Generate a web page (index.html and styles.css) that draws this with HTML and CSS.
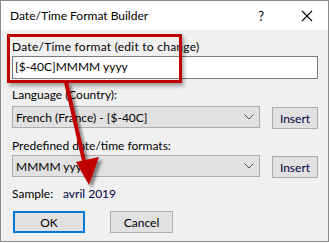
FILE: index.html
```html
<!DOCTYPE html>
<html>
<head>
<meta charset="utf-8">
<link rel="stylesheet" href="styles.css">
</head>
<body>
<div class="window">
  <div class="titlebar">
    <span class="title">Date/Time Format Builder</span>
    <span class="help">?</span>
    <svg class="close" width="12" height="12" viewBox="0 0 12 12"><path d="M1 1L11 11M11 1L1 11" stroke="#000" stroke-width="1.1" fill="none"/></svg>
  </div>
  <div class="content">
    <div class="label first">Date/Time format (edit to change)</div>
    <div class="input">[$-40C]MMMM yyyy</div>
    <div class="label lang">Language (Country):</div>
    <div class="row">
      <div class="combo"><span>French (France) - [$-40C]</span><svg class="chev" width="10" height="6" viewBox="0 0 10 6"><path d="M0.5 0.5L5 5L9.5 0.5" stroke="#555" fill="none"/></svg></div>
      <div class="btn insert">Insert</div>
    </div>
    <div class="label pre">Predefined date/time formats:</div>
    <div class="row row2">
      <div class="combo"><span>MMMM yyyy</span><svg class="chev" width="10" height="6" viewBox="0 0 10 6"><path d="M0.5 0.5L5 5L9.5 0.5" stroke="#555" fill="none"/></svg></div>
      <div class="btn insert">Insert</div>
    </div>
    <div class="sample"><span class="slabel">Sample:</span><span class="sval">avril 2019</span></div>
    <div class="buttons">
      <div class="btn ok">OK</div>
      <div class="btn cancel">Cancel</div>
    </div>
  </div>
  <div class="highlight"></div>
  <svg class="arrow" width="140" height="210" viewBox="0 0 140 210">
    <defs>
      <filter id="sh" x="-50%" y="-50%" width="200%" height="200%">
        <feGaussianBlur in="SourceAlpha" stdDeviation="1.5"/>
        <feOffset dx="3" dy="3" result="b"/>
        <feComponentTransfer><feFuncA type="linear" slope="0.45"/></feComponentTransfer>
        <feMerge><feMergeNode/><feMergeNode in="SourceGraphic"/></feMerge>
      </filter>
    </defs>
    <g filter="url(#sh)">
      <path d="M66 82L84 161" stroke="#c00000" stroke-width="4" fill="none"/>
      <path d="M89 185L76 162L99 157Z" fill="#c00000"/>
    </g>
  </svg>
</div>
</body>
</html>
```
FILE: styles.css
```css
html, body {
  margin: 0;
  padding: 0;
  background: #ffffff;
}
body {
  font-family: Lato, "Liberation Sans", Arial, sans-serif;
  font-size: 12px;
  color: #000;
}
.window {
  position: relative;
  box-sizing: border-box;
  width: 329px;
  height: 242px;
  border: 1px solid #8a8a8a;
  background: #f0f0f0;
  box-shadow: 1px 1px 2px rgba(0,0,0,0.25);
}
.titlebar {
  height: 29px;
  background: #ffffff;
  display: flex;
  align-items: center;
}
.title {
  margin-left: 9px;
  flex: 1;
}
.help {
  font-size: 13px;
  margin-right: 37px;
}
.close {
  margin-right: 15px;
}
.content {
  padding-left: 11px;
  padding-right: 10px;
}
.label {
  height: 14px;
  line-height: 14px;
}
.first {
  margin-top: 10px;
  letter-spacing: 0.25px;
}
.input {
  margin-top: 2px;
  box-sizing: border-box;
  height: 23px;
  border: 1px solid #7a7a7a;
  background: #fff;
  padding-left: 2px;
  line-height: 20px;
}
.lang { margin-top: 9px; }
.pre { margin-top: 10px; }
.row {
  display: flex;
  margin-top: 4px;
  height: 23px;
}
.row2 { margin-top: 2px; }
.combo {
  box-sizing: border-box;
  width: 248px;
  height: 22px;
  border: 1px solid #adadad;
  background: #e1e1e1;
  display: flex;
  align-items: center;
  padding-left: 3px;
  padding-right: 5px;
}
.combo span { flex: 1; }
.btn {
  box-sizing: border-box;
  height: 22px;
  border: 1px solid #adadad;
  background: #e1e1e1;
  display: flex;
  align-items: center;
  justify-content: center;
}
.insert {
  margin-left: 12px;
  margin-top: 1px;
  width: 46px;
  color: #000040;
}
.sample {
  margin-top: 9px;
  height: 14px;
  line-height: 14px;
  display: flex;
}
.slabel { width: 51px; }
.sval { color: #000040; }
.buttons {
  display: flex;
  margin-top: 10px;
  margin-left: 1px;
}
.ok {
  width: 72px;
  border: 2px solid #0078d7;
}
.cancel {
  margin-left: 25px;
  width: 63px;
}
.highlight {
  position: absolute;
  left: 6px;
  top: 33px;
  width: 175px;
  height: 49px;
  box-sizing: border-box;
  border: 3px solid #c00000;
  box-shadow: 2px 3px 4px rgba(0,0,0,0.35);
}
.arrow {
  position: absolute;
  left: -1px;
  top: -1px;
}
```
